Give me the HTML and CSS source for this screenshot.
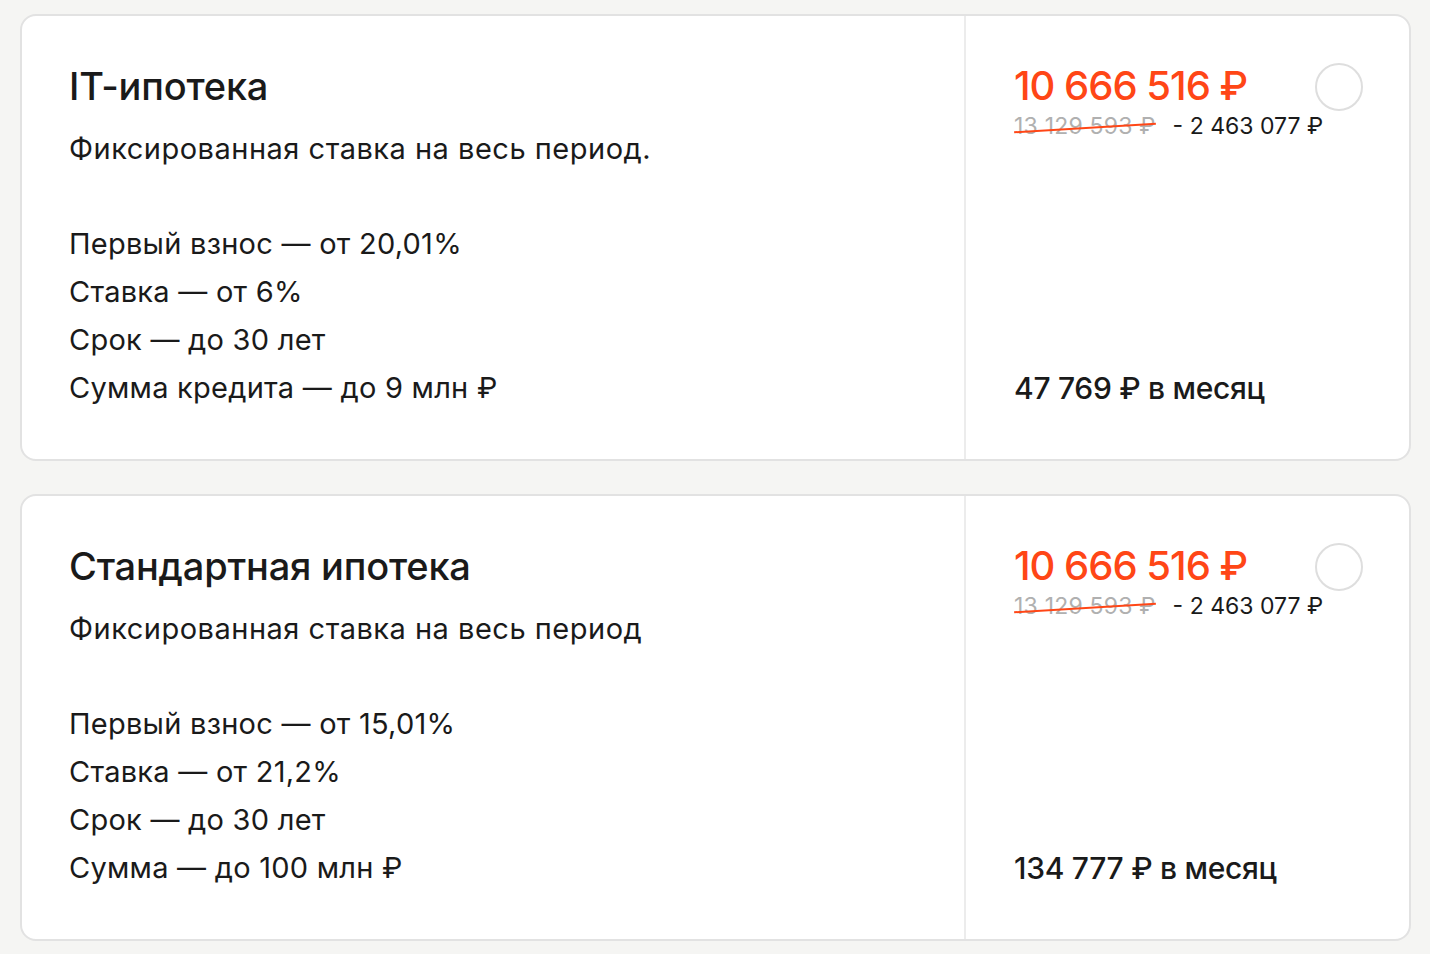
FILE: index.html
```html
<!DOCTYPE html>
<html lang="ru">

<head>
    <meta charset="utf-8">
    <meta name="viewport" content="width=device-width, initial-scale=1.0">
    <title>Ипотека</title>
    <link rel="stylesheet" href="styles.css">
</head>

<body>
    <main class="programs">

        <article class="program">
            <div class="program-info">
                <h2 class="program-name">IT-ипотека</h2>
                <p class="program-desc">Фиксированная ставка на весь период.</p>
                <ul class="program-terms">
                    <li>Первый взнос — от 20,01%</li>
                    <li>Ставка — от 6%</li>
                    <li>Срок — до 30 лет</li>
                    <li>Сумма кредита — до 9 млн ₽</li>
                </ul>
            </div>
            <div class="program-price">
                <div class="price-top">
                    <div class="price-values">
                        <div class="price-new">10 666 516 ₽</div>
                        <div class="price-row">
                            <span class="price-old">13 129 593 ₽</span>
                            <span class="price-diff">- 2 463 077 ₽</span>
                        </div>
                    </div>
                    <span class="radio"></span>
                </div>
                <div class="price-month">47 769 ₽ в месяц</div>
            </div>
        </article>

        <article class="program">
            <div class="program-info">
                <h2 class="program-name">Стандартная ипотека</h2>
                <p class="program-desc">Фиксированная ставка на весь период</p>
                <ul class="program-terms">
                    <li>Первый взнос — от 15,01%</li>
                    <li>Ставка — от 21,2%</li>
                    <li>Срок — до 30 лет</li>
                    <li>Сумма — до 100 млн ₽</li>
                </ul>
            </div>
            <div class="program-price">
                <div class="price-top">
                    <div class="price-values">
                        <div class="price-new">10 666 516 ₽</div>
                        <div class="price-row">
                            <span class="price-old">13 129 593 ₽</span>
                            <span class="price-diff">- 2 463 077 ₽</span>
                        </div>
                    </div>
                    <span class="radio"></span>
                </div>
                <div class="price-month">134 777 ₽ в месяц</div>
            </div>
        </article>

    </main>
</body>

</html>
```

FILE: styles.css
```css
body {
    background-color: #f5f5f3;
    font-family: Inter, "Noto Sans", sans-serif;
    color: #1a1a1a;
    margin: 0;
    padding: 14px 19px 0 20px;
}

.programs {
    display: flex;
    flex-direction: column;
    gap: 33px;
}

.program {
    display: flex;
    height: 443px;
    background-color: #fff;
    border: 2px solid #e2e2e2;
    border-radius: 16px;
}

.program-info {
    flex-shrink: 0;
    width: 895px;
    padding: 48px 0 0 47px;
    border-right: 2px solid #ececec;
}

.program-name {
    margin: 0;
    font-size: 38px;
    line-height: 44px;
    font-weight: 500;
    letter-spacing: -0.2px;
}

.program-desc {
    margin: 21px 0 0;
    font-size: 29px;
    line-height: 40px;
    font-weight: 400;
    letter-spacing: 0.5px;
}

.program-terms {
    list-style: none;
    margin: 51px 0 0;
    padding: 0;
    font-size: 29px;
    line-height: 48px;
    letter-spacing: 0.25px;
}

.program-price {
    flex: 1;
    min-width: 0;
    display: flex;
    flex-direction: column;
    justify-content: space-between;
    padding: 46px 46px 51px 48px;
}

.price-top {
    display: flex;
    justify-content: space-between;
    align-items: flex-start;
}

.price-values {
    min-width: 0;
    white-space: nowrap;
}

.price-new {
    color: #ff4616;
    font-size: 40px;
    line-height: 48px;
    font-weight: 500;
    letter-spacing: -1px;
}

.price-row {
    display: flex;
    gap: 17px;
    font-size: 23px;
    line-height: 30px;
    margin-top: 1px;
}

.price-old {
    position: relative;
    color: #b0b0b0;
    letter-spacing: 0.2px;
}

.price-old::after {
    content: "";
    position: absolute;
    left: 0;
    right: 0;
    top: 16px;
    height: 2px;
    background-color: #ff4616;
    transform: rotate(-3.5deg);
}

.price-diff {
    color: #1a1a1a;
}

.radio {
    flex-shrink: 0;
    width: 44px;
    height: 44px;
    border: 2px solid #dedede;
    border-radius: 50%;
    margin-top: 1px;
}

.price-month {
    font-size: 30px;
    line-height: 40px;
    font-weight: 500;
    letter-spacing: -0.3px;
}
```
